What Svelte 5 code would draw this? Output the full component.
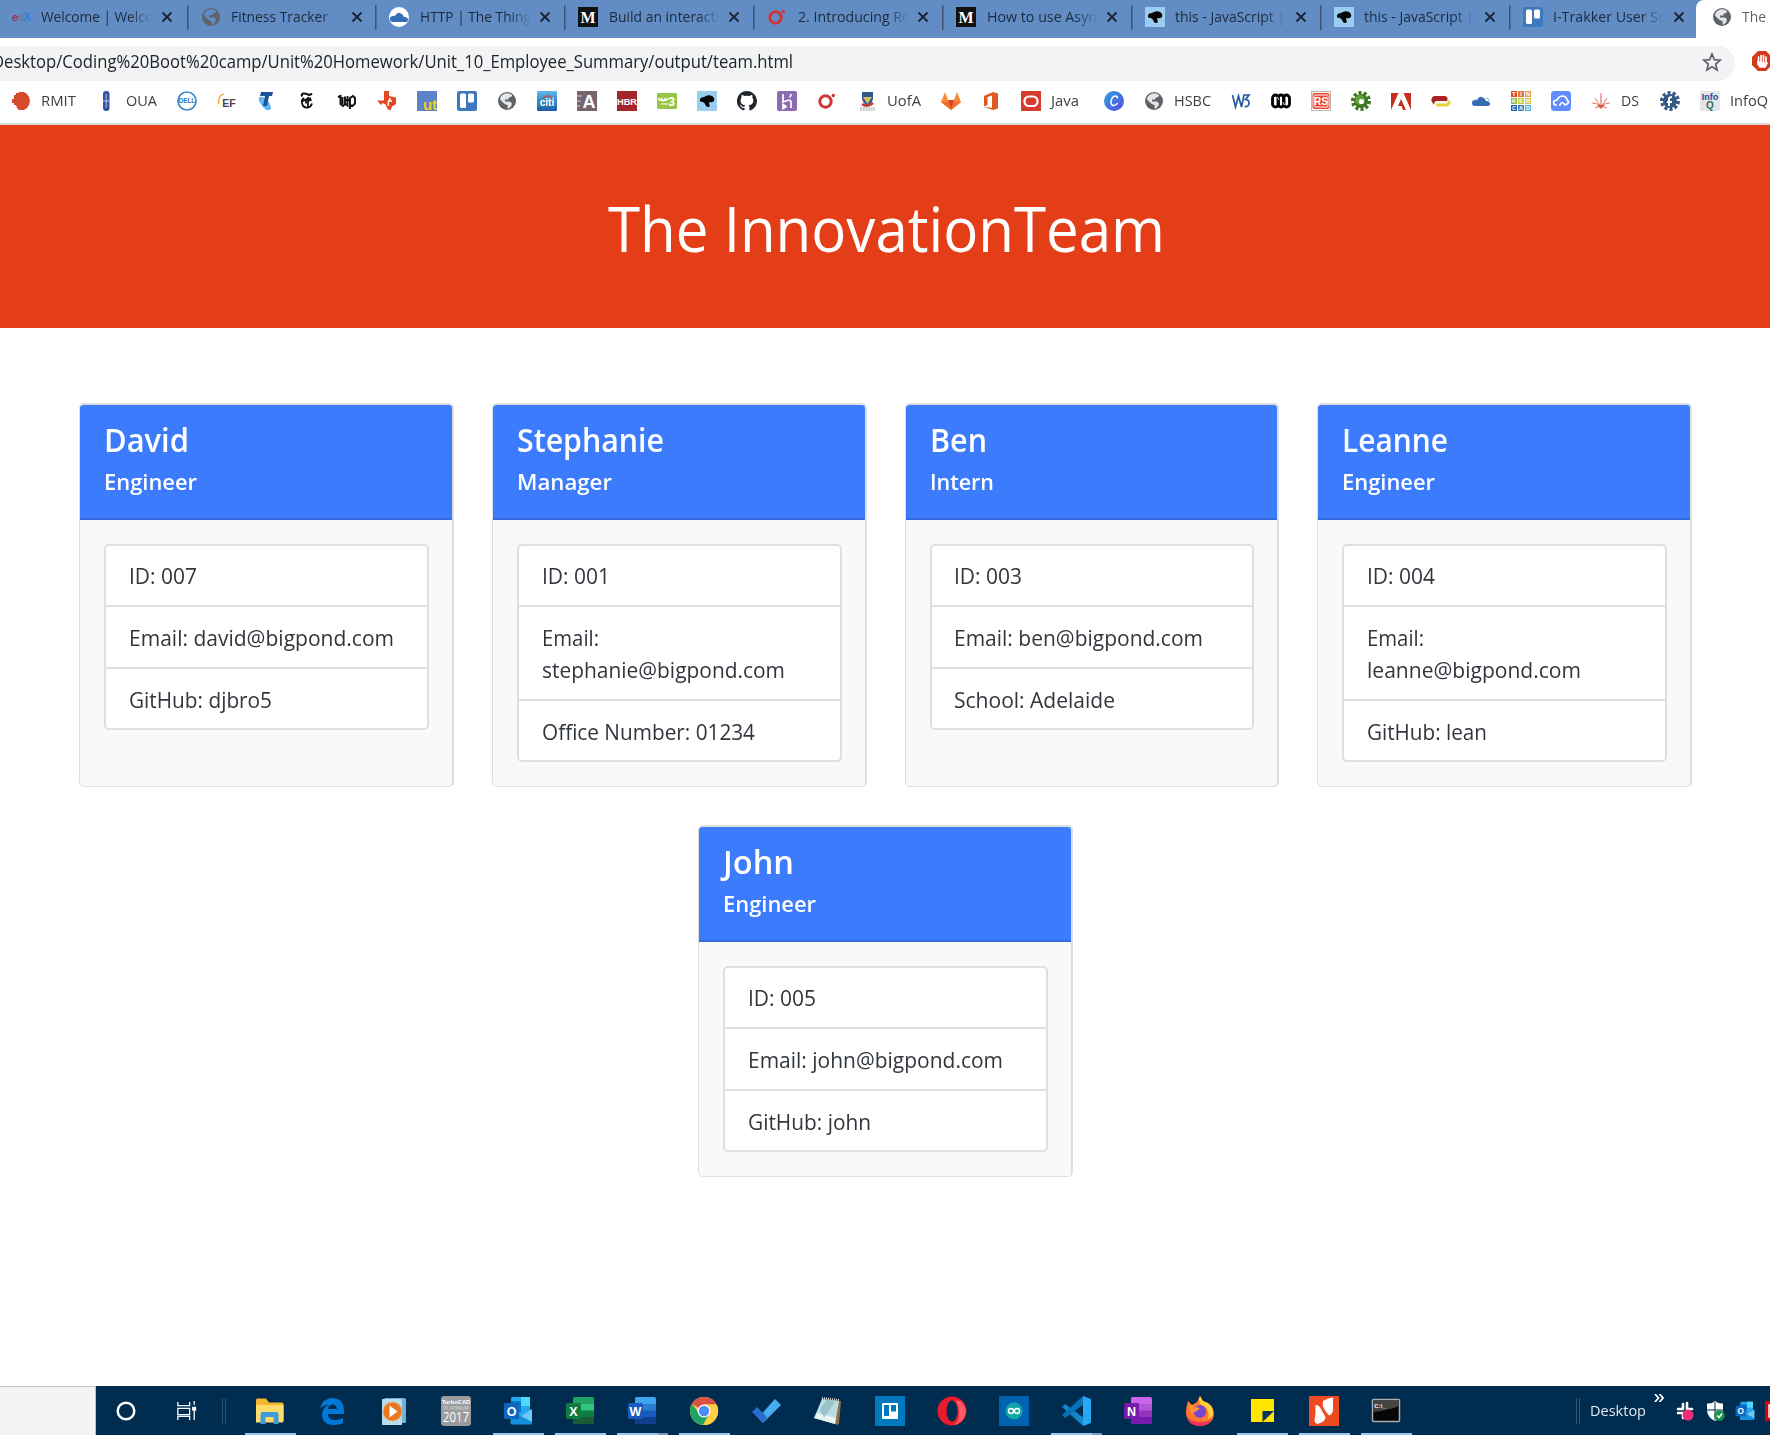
<script>
  // Draws a label at an exact width by scaling it horizontally.
  function fit(node, width) {
    const natural = node.getBoundingClientRect().width;
    if (natural && width) node.style.transform = `scaleX(${width / natural})`;
  }

  const t = (x, y, size, fill, text, extra = '') =>
    `<text x="${x}" y="${y}" font-size="${size}" fill="${fill}" text-anchor="middle" ${extra}>${text}</text>`;
  const sans = 'font-family="Liberation Sans, sans-serif" font-weight="bold"';
  const serif = 'font-family="Liberation Serif, serif" font-weight="bold"';

  const trello = `<rect width="20" height="20" rx="2" fill="#3d79bd"/><rect x="3" y="2.5" width="6" height="14.5" rx="1.5" fill="#fff"/><rect x="11" y="2.5" width="6" height="9" rx="1.5" fill="#fff"/>`;
  const globe = `<circle cx="10" cy="10" r="9" fill="#5f6368"/><path d="M8 2.5Q12 1.5 15 4q0 2-3 2.500L11 8.500H8v2h5l2 2-1 3-3 2.500q-1-2 0-3.500l-4-2-4-4q0-4 5-6z" fill="#e4e6e9"/>`;
  const tabGlobe = globe.replace('#e4e6e9', '#618dc4');
  const beast = `<rect width="20" height="20" fill="#9bcdf0"/><path d="M3 8q1-2 4-2 4-3 8-1 3 2 2 5-2 2-5 1 0 2 1 4-2 2-4 0-1-3-3-4l-3-.5z" fill="#050505"/>`;
  const medium = `<rect width="20" height="20" fill="#111"/>${t(10, 15.500, 16, '#fff', 'M', serif)}`;
  const oring = `<circle cx="8.500" cy="10.500" r="5.700" fill="none" stroke="#cf3438" stroke-width="3"/><circle cx="16.300" cy="4.500" r="1.700" fill="#cf3438"/>`;
  const gear = (c) => `<circle cx="10" cy="10" r="8" fill="none" stroke="${c}" stroke-width="4" stroke-dasharray="3 2"/><circle cx="10" cy="10" r="7" fill="${c}"/>`;
  const cloud = (c) => `<path d="M4 15a3 3 0 0 1 0-6q1-1 2 0 2-4 5-3t4 4q4 0 4 3 0 2-2 2z" fill="${c}"/>`;
  const office = (letter, dark, c) =>
    `<rect x="8" y="1" width="21" height="27" rx="1.500" fill="${c[0]}"/><rect x="8" y="8" width="21" height="7" fill="${c[1]}"/><rect x="8" y="14.500" width="21" height="7" fill="${c[2]}"/><rect x="8" y="21" width="21" height="7" rx="1" fill="${c[3]}"/><rect x="1" y="7" width="15" height="16" rx="1.500" fill="${dark}"/>${t(8.5, 19.5, 12.5, '#fff', letter, sans)}`;
  const outlook = `<rect x="8" y="1" width="19" height="20" rx="1.500" fill="#28a8ea"/><rect x="18" y="1" width="9" height="9" fill="#50d9ff"/><rect x="8" y="5" width="10" height="11" fill="#0078d4"/><path d="M8 14l10 6 11-7v14q0 1.500-1.500 1.500H9q-1.500 0-1.500-1.500z" fill="#1490df"/><path d="M18 20l11-7v13z" fill="#70c8f5"/><rect x="1" y="7" width="15" height="16" rx="1.500" fill="#0f66bd"/>${t(8.5, 19.5, 12.5, '#fff', 'O', sans)}`;

  const icons = {
    edx: t(4, 14, 11, '#a7275d', 'e', sans) + t(10, 14, 11, '#6d7899', 'd', sans) + t(16, 14, 12, '#2e83e6', 'X', sans),
    globe, tabGlobe, medium, oring, beast, trello,
    things: `<circle cx="10" cy="10" r="10" fill="#fff"/>${cloud('#356fb4')}`,
    rmit: `<path d="M3 4h2V2h3V1h5l3 2 2 3 1 4-1 4-2 3-3 2H8l-2-2-1-3H3v-2H1V8h2z" fill="#d44a2b"/>`,
    oua: `<rect x="7" y="0" width="6.500" height="20" rx="3" fill="#3350a5"/><path d="M7 10h6.500M10.200 3v14" stroke="#b9c6e6" stroke-width="1"/>`,
    dell: `<circle cx="10" cy="10" r="9" fill="#fff" stroke="#3c86c6" stroke-width="1.700"/>${t(10, 12.3, 6.3, '#2378bf', 'DELL', sans)}`,
    ef: `<path d="M7 3Q0 5 2 13" fill="none" stroke="#eda23c" stroke-width="1.300"/>${t(12, 15.5, 10.5, '#444', 'EF', sans)}`,
    telstra: `<path d="M2 6q5-1 8 3 4 4 4 9-4 3-7-1Q1 11 2 6z" fill="#5cb8ee"/><path d="M4 1h12l-1 4h-3l-2 10H6L8 5H3z" fill="#1e50a0"/>`,
    times: `<path d="M5 5.500q-1-3 2-3 2 0 4 1t4-1" fill="none" stroke="#111" stroke-width="2.200"/><path d="M14 7l-3 1.500q2 1.500 3.500 0M7 7q-3 2-2 5 1 5 5.500 4.500Q14 16 15 12.500M11 6v10M5 10.500l4-2v4" fill="none" stroke="#111" stroke-width="1.800"/>`,
    wp: `<path d="M1 6l2.500-1v8L6 15l2-2V5.500M5.500 6v7M8.500 13l2 1.500V5M8 9h5M13 6v12M13 7l3-2 2 2v5.500L15.500 15 13 13.500" fill="none" stroke="#111" stroke-width="1.900"/>`,
    texas: `<path d="M7 0h5v5l7 1.500v6.500l-4 2.500-1.500 4-3-1.500-2-4.500-3-1.500-1.500 2L0 9.500h7z" fill="#e4461f"/><path d="M13.500 7q-3.500 5-2 8m0-5h3.500" stroke="#fff" stroke-width="1.500" fill="none"/>`,
    ut: `<rect width="20" height="20" fill="#5b83c7"/>${t(13, 19, 15, '#f6cd25', 'ut', sans)}`,
    citi: `<defs><linearGradient id="cg" x2="0" y2="1"><stop stop-color="#5fb9ec"/><stop offset="1" stop-color="#195ca7"/></linearGradient></defs><rect width="20" height="20" rx="1" fill="url(#cg)"/>${t(10, 14.5, 10, '#fff', 'citi', sans)}<path d="M6 7q4-4 9 0" stroke="#b9505b" fill="none" stroke-width="1.300"/>`,
    aicon: `<rect width="20" height="20" fill="#76656f"/>${t(12, 17, 18, '#fff', 'A', sans)}<path d="M0 5h5M0 10h4M0 15h3" stroke="#d9d2d6"/>`,
    hbr: `<rect width="20" height="20" fill="#a3262a"/>${t(10, 13.5, 9.3, '#fff', 'HBR', sans)}`,
    w3: `<rect y="2" width="20" height="16" rx="1" fill="#98c544"/><path d="M2 7q1 4 3 1 1 4 3 0 1 3 3-1" stroke="#fff" stroke-width="1.600" fill="none"/>${t(14.500, 14.500, 12, '#fff', '3', sans)}<path d="M4 13h7" stroke="#fff"/>`,
    github: `<path d="M10 0a10 10 0 0 0-3.200 19.500c.5.100.7-.2.7-.5v-2c-2.800.6-3.400-1.200-3.400-1.200-.5-1.100-1.100-1.500-1.100-1.500-.9-.6.100-.6.100-.6 1 .1 1.500 1 1.500 1 .9 1.600 2.400 1.100 2.900.9.100-.7.400-1.100.6-1.300-2.200-.3-4.500-1.100-4.500-5 0-1.100.4-2 1-2.700-.1-.2-.4-1.200.1-2.600 0 0 .8-.3 2.700 1a9.500 9.500 0 0 1 5 0c2-1.300 2.800-1 2.800-1 .5 1.400.2 2.400.1 2.600.6.700 1 1.600 1 2.700 0 3.900-2.300 4.700-4.600 5 .4.300.7.900.7 1.800V19c0 .3.200.6.700.5A10 10 0 0 0 10 0z" fill="#20262d"/>`,
    heroku: `<rect width="20" height="20" rx="2" fill="#8d6bb0"/><path d="M6 3v8q8-3.500 8 0v6M6 13.500l3 2.200L6 17.500zM14 3q0 2-1.500 3.500" fill="none" stroke="#fff" stroke-width="1.700"/>`,
    uofa: `<path d="M5 1h11v7q-2 6-5.500 6T5 8z" fill="#315988"/><path d="M6 6h9l-4.500 7z" fill="#d8bd66"/><path d="M5 13q5 4 11-1" stroke="#c53831" stroke-width="2.500" fill="none"/><path d="M3 17h15M3 19h15" stroke="#9a9a9a" stroke-dasharray="2 .7"/>`,
    gitlab: `<path d="M0 11L4 1l3 8h6l3-8 4 10-10 8z" fill="#fc8a35"/><path d="M7 9h6l-3 10z" fill="#dd4525"/><path d="M0 11h7l3 8zM20 11h-7l-3 8z" fill="#ef6d2d"/>`,
    office: `<path d="M3 5l9-4 5 1.500v15L12 19l-9-3 8 .8V4.500L6.500 6v8L3 15.500z" fill="#df5920"/>`,
    java: `<rect width="20" height="20" fill="#d83b2d"/><rect x="3.500" y="5.500" width="13" height="9.500" rx="4.500" stroke="#fff" stroke-width="2.200" fill="none"/>`,
    canva: `<defs><linearGradient id="cv" y2="1"><stop stop-color="#27a4dd"/><stop offset="1" stop-color="#5a4be2"/></linearGradient></defs><circle cx="10" cy="10" r="10" fill="url(#cv)"/><path d="M13.500 7.500q0-2.500-2-2.500C8.500 5 7 8.500 7 11.500 7 16 12 15 13.500 12" stroke="#fff" stroke-width="1.500" fill="none"/>`,
    w3c: `<path d="M1.500 4l3 12L7.500 5l3 11 2.500-12h5l-3.500 4.500q3.500 0 3.500 3.500 0 4-4.500 3.500" fill="none" stroke="#245ba4" stroke-width="1.700"/>`,
    abc: `<g fill="none" stroke="#000" stroke-width="2.800"><rect x="1.500" y="4" width="6" height="12" rx="3"/><rect x="7" y="4" width="6" height="12" rx="3"/><rect x="12.500" y="4" width="6" height="12" rx="3"/></g><path d="M6.500 6l1.500 3M12 11l1.500 3" stroke="#fff" stroke-width=".9"/>`,
    rs: `<rect width="20" height="20" fill="#bbb5b3"/><rect x="1" y="1" width="18" height="18" fill="#fff"/><rect x="1.500" y="2" width="17" height="16" rx="2" fill="#e7452e"/><rect x="3" y="4" width="14" height="12" rx="1" fill="none" stroke="#fff"/>${t(10, 14, 10, '#fff', 'RS', sans)}`,
    green: gear('#3c7421') + '<circle cx="9" cy="9" r="5" fill="#63a13b"/><circle cx="10.500" cy="10.500" r="2.600" fill="#fff"/>',
    adobe: `<path d="M0 2h7.500L0 19zM12.500 2H20v17zM10 8l5 11h-3l-1.500-4H7z" fill="#c5301d"/>`,
    pill: `<path d="M17 9q4 1 2 4-1 2.500-4 2.500H8q-4 0-3-3h9q3 0 3-3.500z" fill="#e6d534"/><path d="M1 11q-2-4 2-6h11q4 1 2 5H6q-3 0-3 4z" fill="#a92323"/>`,
    cloud: cloud('#356eb2') + '<path d="M15 7q3 0 3 3" stroke="#8bb0da" fill="none"/>',
    tinker: ['#d94d29', '#e27634', '#e99a45', '#91ba43', '#c4cc46', '#d8ca3c', '#2b5b9f', '#3e83c4', '#5eacdf']
      .map((c, i) => `<rect x="${(i % 3) * 7}" y="${Math.floor(i / 3) * 7}" width="6" height="6" fill="${c}"/>${t((i % 3) * 7 + 3, Math.floor(i / 3) * 7 + 5, 5.5, '#fff', 'TINKERCAD'[i], sans)}`).join(''),
    car: `<rect width="20" height="20" rx="3.500" fill="#5f8dfc"/><path d="M6 14H4q-2-1-1-4l3-1q2-4 6-4 4 1 4 4 3 2 0 4l-2 1q-3-5-5 0H8" fill="none" stroke="#fff" stroke-width="1.700"/>`,
    ds: `<path d="M10 16V2M10 16L4 7M10 16l6-9M10 15Q6 12 1 12M10 15q4-3 9-3M10 15l-6 2M10 15l6 2" fill="none" stroke="#e6776b" stroke-width="1"/><path d="M9 6l1-5 1 5v9H9z" fill="#eeaaa2"/><path d="M6 14h8l-4 4z" fill="#df5648"/>`,
    bluegear: gear('#395985') + '<path d="M9 15V8q0-2 3-2M7 11h5" fill="none" stroke="#fff" stroke-width="2"/>',
    infoq: `<rect width="20" height="20" rx="2" fill="#e1e5e7"/>${t(10, 9, 9, '#1a4e9b', 'Info', sans)}${t(10, 18, 10, '#28745a', 'Q', sans)}`
  };

  const tabs = [
    { icon: 'edx', label: 'Welcome | Welco', w: 112 },
    { icon: 'tabGlobe', label: 'Fitness Tracker', w: 97 },
    { icon: 'things', label: 'HTTP | The Thing', w: 111 },
    { icon: 'medium', label: 'Build an interacti', w: 110 },
    { icon: 'oring', label: '2. Introducing Re', w: 112 },
    { icon: 'medium', label: 'How to use Asyn', w: 110 },
    { icon: 'beast', label: 'this - JavaScript |', w: 110 },
    { icon: 'beast', label: 'this - JavaScript |', w: 110 },
    { icon: 'trello', label: 'I-Trakker User Sc', w: 112 }
  ];

  const bookmarks = [
    ['rmit', 'RMIT', 35, 35], ['oua', 'OUA', 31, 31], ['dell'], ['ef'], ['telstra'], ['times'], ['wp'], ['texas'],
    ['ut'], ['trello'], ['globe'], ['citi'], ['aicon'], ['hbr'], ['w3'], ['beast'], ['github'], ['heroku'],
    ['oring'], ['uofa', 'UofA', 34, 34], ['gitlab'], ['office'], ['java', 'Java', 28, 33], ['canva'],
    ['globe', 'HSBC', 37, 37], ['w3c'], ['abc'], ['rs'], ['green'], ['adobe'], ['pill'], ['cloud'], ['tinker'],
    ['car'], ['ds', 'DS', 18, 19], ['bluegear'], ['infoq', 'InfoQ', 38, 37]
  ];

  const team = [
    { name: 'David', nw: 85, role: 'Engineer', rw: 93, rows: [[['ID: 007', 68]], [['Email: david@bigpond.com', 265]], [['GitHub: djbro5', 143]]] },
    { name: 'Stephanie', nw: 147, role: 'Manager', rw: 95, rows: [[['ID: 001', 68]], [['Email:', 57], ['stephanie@bigpond.com', 243]], [['Office Number: 01234', 213]]] },
    { name: 'Ben', nw: 57, role: 'Intern', rw: 64, rows: [[['ID: 003', 68]], [['Email: ben@bigpond.com', 249]], [['School: Adelaide', 161]]] },
    { name: 'Leanne', nw: 106, role: 'Engineer', rw: 93, rows: [[['ID: 004', 68]], [['Email:', 57], ['leanne@bigpond.com', 214]], [['GitHub: lean', 120]]] },
    { name: 'John', nw: 71, role: 'Engineer', rw: 93, rows: [[['ID: 005', 68]], [['Email: john@bigpond.com', 255]], [['GitHub: john', 123]]] }
  ];

  const apps = [
    { open: 1, art: `<path d="M1 4q0-1.500 1.500-1.500H11l3 4h13q1.500 0 1.500 1.500v17H1z" fill="#f5b62f"/><path d="M1 9h27.500v16q0 1.500-1.500 1.500H1z" fill="#ffdb6c"/><path d="M5.500 28V18q0-2 2-2h14q2 0 2 2v10h-5v-7h-8v7z" fill="#3f9ddb"/>` },
    { art: `<path d="M3 13Q5 2 16 2q11 1 11 13v3H11q0 6 7 6 5 0 8-2v5q-4 2-9 2Q5 29 5 18 6 11 12 9q-6 0-9 4zM11 13h9q-1-4.500-4.500-4.500T11 13z" fill="#0078d7"/>` },
    { art: `<rect x="5" y="2" width="22" height="25" rx="1.500" fill="#6fb2d4"/><rect x="3" y="3" width="20" height="26" rx="1" fill="#b6dced"/><circle cx="13.500" cy="15.500" r="9.500" fill="#e97722" stroke="#f4ad6d"/><path d="M10.500 9.500v12l8-6z" fill="#fff"/>` },
    { art: `<rect width="30" height="30" rx="3" fill="#9b9c9e"/>${t(15, 8, 5.800, '#fff', 'TurboCAD', sans)}${t(15, 14, 5, '#c5c5c5', 'PLATINUM', sans)}${t(15, 26, 14, '#fff', '2017', 'font-family="Open Sans, sans-serif" textLength="26" lengthAdjust="spacingAndGlyphs"')}` },
    { open: 1, art: outlook },
    { open: 1, art: office('X', '#107c41', ['#21a366', '#33c481', '#107c41', '#185c37']) },
    { open: 2, art: office('W', '#185abd', ['#41a5ee', '#2b7cd3', '#185abd', '#103f91']) },
    { open: 1, art: `<circle cx="15" cy="15" r="14" fill="#ffcd46"/><path d="M15 15L2.900 8A14 14 0 0 1 27.500 8.500H15z" fill="#dd5144"/><path d="M2.900 8A14 14 0 0 0 14 29l6-11-5-3-5 2z" fill="#1da462"/><path d="M15 8.500h12.500A14 14 0 0 1 14 29l7-11z" fill="#ffcd46"/><circle cx="15" cy="15" r="6.500" fill="#fff"/><circle cx="15" cy="15" r="5.200" fill="#4c8bf5"/>` },
    { art: `<path d="M7 22L24 3l6 6-18 18z" fill="#46aef0"/><path d="M1 16l5-5 10 10-4 6z" fill="#2b6ccd"/>` },
    { art: `<path d="M9 3l19 2-2 23-3 1z" fill="#8b7048"/><path d="M9 3l17 2-4 23L1 22z" fill="#bbdde1"/><path d="M4 17l19 5-1 6L1 22z" fill="#e9f5f3"/><path d="M7 13l7-10 8 3-11 16z" fill="#75a9b5" opacity=".5"/><path d="M9 2l17 2" stroke="#ddd" stroke-width="2" stroke-dasharray="1 1"/>` },
    { art: `<rect width="30" height="30" fill="#0079bf"/><rect x="7" y="7" width="16" height="16" rx="1" fill="#fff"/><rect x="9" y="9" width="5" height="11" fill="#0079bf"/><rect x="16" y="9" width="5" height="6.500" fill="#0079bf"/>` },
    { art: `<ellipse cx="15" cy="15" rx="14.500" ry="14.500" fill="#e81a2b"/><path d="M18 5q7-3 11 9-1 13-13 15 7-3 6-14-1-9-4-10z" fill="#ff5963"/><ellipse cx="15" cy="15" rx="5.500" ry="10.500" fill="#002c4f"/>` },
    { art: `<rect width="30" height="30" fill="#0063b1"/><circle cx="15" cy="15" r="8.500" fill="#12a4a7"/><g fill="none" stroke="#fff" stroke-width="1.400"><circle cx="12" cy="15" r="2.500"/><circle cx="18" cy="15" r="2.500"/></g>` },
    { open: 2, art: `<path d="M22 0v30L1 11l3-3 19 14z" fill="#1684c9"/><path d="M22 0L1 19l3 3L23 8z" fill="#0873b6"/><path d="M22 0l8 3v24l-8 3z" fill="#29a8f2"/>` },
    { art: office('N', '#7719aa', ['#ca64ea', '#b156d7', '#9332bf', '#7719aa']) },
    { art: `<path d="M3 5l4 4 5-3 3-6 3 5q11 3 11 13-1 11-14 12Q2 29 1 17q0-7 2-12z" fill="#ff7930"/><path d="M15 0l3 5q11 3 10 14l-5 5q3-12-8-16-2-4 0-8z" fill="#ffcf3b"/><path d="M1 18q2 12 14 12 8 0 12-7-6 4-13 3Q4 26 1 18z" fill="#f9305c"/><circle cx="15" cy="15.500" r="6.300" fill="#7545d3"/><path d="M4 9q4 0 6 2l5 1-3 3-5 2z" fill="#ff9435"/>` },
    { open: 1, art: `<path d="M4 3h23v23H4z" fill="#ffe500"/><path d="M15.500 26V15H27z" fill="#0c365a"/>` },
    { open: 1, art: `<rect width="30" height="30" fill="#f04a20"/><path d="M14 5q4-3 10-3.500v12q0 4-4 6l-4-5q-3-4-2-9.500zM6.500 9q4 0 6 5l4 7q0 5-8 7-3-1-3-4 1.500-7 1-15z" fill="#fff"/>` },
    { open: 1, art: `<rect x="1.500" y="3.500" width="27" height="22" rx="1" fill="#060606" stroke="#adadad" stroke-width="1.500"/><path d="M2 4h26v6q-10 4-26 6z" fill="#444"/>${t(9, 12, 6, '#fff', 'C:\\_', sans)}` }
  ];
</script>

{#snippet icon(name)}
  <svg class="icon" viewBox="0 0 20 20">{@html icons[name]}</svg>
{/snippet}

<div class="screen">
  <div class="tabs">
    {#each tabs as tab}
      <div class="tab">
        {@render icon(tab.icon)}
        <div class="tab-label"><span class="fit" use:fit={tab.w}>{tab.label}</span></div>
        <svg class="close" viewBox="0 0 12 12"><path d="M1.500 1.500l9 9m0-9l-9 9" /></svg>
      </div>
    {/each}
    <div class="tab active">
      {@render icon('globe')}
      <div class="tab-label last"><span class="fit" use:fit={24}>The</span></div>
    </div>
  </div>

  <div class="address">
    <div class="omnibox">
      <span class="fit" use:fit={801}>Desktop/Coding%20Boot%20camp/Unit%20Homework/Unit_10_Employee_Summary/output/team.html</span>
      <svg class="star" viewBox="0 0 20 20"><path d="M10 2l2.300 5.600 6 .5-4.600 4 1.400 5.900L10 14.800 4.900 18l1.400-5.900-4.600-4 6-.5z" /></svg>
    </div>
    <svg class="blocker" viewBox="0 0 20 20">
      <path d="M6 0h8l6 6v8l-6 6H6l-6-6V6z" fill="#d13a1d" />
      <path d="M6.500 11V6M9 11V4.500M11.500 11V4.500M14 11V6M6 10v3l2 3h5l2-4" stroke="#fff" stroke-width="1.700" stroke-linecap="round" fill="#fff" />
    </svg>
  </div>

  <div class="bookmarks">
    {#each bookmarks as [name, label, w, slot]}
      <div class="bookmark">
        {@render icon(name)}
        {#if label}
          <div class="slot" style="width: {slot}px"><span class="fit" use:fit={w}>{label}</span></div>
        {/if}
      </div>
    {/each}
  </div>

  <header class="hero"><h1 class="title" use:fit={557}>The InnovationTeam</h1></header>

  <main class="team">
    {#each team as m}
      <article class="card">
        <div class="card-head">
          <h2><span class="fit" use:fit={m.nw}>{m.name}</span></h2>
          <h4><span class="fit" use:fit={m.rw}>{m.role}</span></h4>
        </div>
        <div class="card-body">
          <ul>
            {#each m.rows as row}
              <li>
                {#each row as [line, w]}
                  <div><span class="fit" use:fit={w}>{line}</span></div>
                {/each}
              </li>
            {/each}
          </ul>
        </div>
      </article>
    {/each}
  </main>

  <footer class="taskbar">
    <div class="search"></div>
    <svg class="cortana" viewBox="0 0 20 20"><circle cx="10" cy="10" r="8.300" /></svg>
    <svg class="taskview" viewBox="0 0 22 22"><path d="M2 1v4h13V1M2 21v-4h13v4M2 8h13v7H2zM20 0v4M20 11v10" /><path d="M18.500 7h3v3h-3z" fill="#fff" /></svg>
    <div class="grip"></div>
    <div class="apps">
      {#each apps as app}
        <div class="app" class:open={app.open} class:stacked={app.open === 2}>
          <svg viewBox="0 0 30 30">{@html app.art}</svg>
        </div>
      {/each}
    </div>
    <div class="grip right"></div>
    <div class="desktop"><span class="fit" use:fit={56}>Desktop</span></div>
    <svg class="chevrons" viewBox="0 0 10 8"><path d="M1 0l3.500 4L1 8M5.500 0L9 4 5.500 8" /></svg>
    <div class="tray">
      <svg viewBox="0 0 20 20"><path d="M8 3v5M12 2v5M3 8h4M12 8h5M3 12h5M8 12v5" stroke="#fff" stroke-width="2.600" stroke-linecap="round" /><circle cx="13" cy="14" r="5.500" fill="#f12d75" /></svg>
      <svg viewBox="0 0 20 20"><path d="M10 0q4 3 8 2.500V10q-1 7-8 10Q3 17 2 10V2.500Q7 3 10 0z" fill="#fff" /><path d="M10 1v18M2 9h16" stroke="#002c4f" stroke-width="1" /><circle cx="14.500" cy="14.500" r="5.200" fill="#18934c" /><path d="M12 14.500l2 2 3-4" fill="none" stroke="#fff" stroke-width="1.500" /></svg>
      <svg viewBox="0 0 30 30">{@html outlook}</svg>
      <svg viewBox="0 0 20 20"><rect width="20" height="20" rx="1" fill="#d9000d" /><path d="M4 4h12v12H4z" fill="none" stroke="#fff" stroke-width="1.500" /></svg>
    </div>
  </footer>
</div>

<style>
  :global(body) { margin: 0; overflow: hidden; }
  * { box-sizing: border-box; }
  .screen { display: flex; flex-direction: column; width: 1770px; height: 1435px; overflow: hidden; background: #fff; font-family: 'Open Sans', 'Noto Sans', sans-serif; color: #30363c; }
  svg { display: block; flex: none; }
  .fit { display: inline-block; white-space: nowrap; transform-origin: 0 50%; }

  .tabs { display: flex; flex: none; height: 38px; background: #618dc4; padding-bottom: 4px; }
  .tab { display: flex; align-items: center; flex: none; width: 188.900px; height: 34px; padding-left: 14px; }
  .tab:first-child { width: 186.500px; padding-left: 10.500px; }
  .tab:not(:first-child):not(.active) { background: linear-gradient(#3e5571, #3e5571) 0 5px / 1.500px 25px no-repeat; }
  .icon { width: 20px; height: 20px; }
  .tab-label { width: 111px; margin: 0 0 2px 10.500px; overflow: hidden; font-size: 15px; line-height: 24px; color: #1c2a3c; mask-image: linear-gradient(90deg, #000 80%, transparent 100%); }
  .close { width: 12px; height: 12px; margin-left: 8.500px; stroke: #182333; stroke-width: 1.800; }
  .tab.active { width: 76px; height: 38px; margin-left: -2px; padding-left: 16px; padding-bottom: 4px; background: #fff; border-top-left-radius: 8px; }
  .tab-label.last { width: auto; color: #5f6368; mask-image: none; }

  .address { display: flex; align-items: center; flex: none; height: 46px; padding-bottom: 1px; }
  .omnibox { display: flex; align-items: center; width: 1735px; height: 35px; flex: none; padding-right: 13px; margin-top: 5px; border-radius: 0 18px 18px 0; background: #f1f3f4; font-size: 17.500px; line-height: 35px; color: #212529; }
  .omnibox .fit { margin: -4px 0 0 -8px; }
  .star { width: 20px; height: 20px; margin: -2px 0 0 auto; fill: none; stroke: #5f6368; stroke-width: 1.700; }
  .blocker { width: 20px; height: 20px; margin: 1px 0 0 17px; }

  .bookmarks { display: flex; gap: 20px; flex: none; height: 41px; padding: 7px 0 0 11px; border-bottom: 2px solid #d5d9dc; }
  .bookmark { display: flex; align-items: center; flex: none; height: 20px; }
  .slot { margin-left: 10px; font-size: 14.500px; line-height: 20px; color: #3c4043; }

  .hero { display: flex; align-items: center; justify-content: center; flex: none; height: 203px; padding: 3px 0 0 3px; background: #e43e19; }
  .title { margin: 0; white-space: nowrap; font-size: 62px; font-weight: 400; line-height: 76px; color: #fff; }

  .team { display: flex; flex-wrap: wrap; justify-content: center; align-content: flex-start; gap: 38px; flex: 1; padding: 75px 0 0 1.600px; }
  .card { display: flex; flex-direction: column; width: 374.700px; border: solid #dedfe1; border-width: 2px 2px 1px 1px; border-radius: 5px; overflow: hidden; background: #f8f9fb; }
  .card-head { flex: none; height: 115px; padding: 15px 24px 0; border-bottom: 2px solid #346ade; background: #3b7bfc; color: #fff; }
  h2 { margin: 0 0 7px; font-size: 33px; font-weight: 600; line-height: 40px; }
  h4 { margin: 0; font-size: 22px; font-weight: 600; line-height: 28px; }
  .card-body { flex: 1; padding: 24px 23px 24px 24px; }
  ul { margin: 0; padding: 0; list-style: none; border: 2px solid #dedfe0; border-radius: 5px; background: #fff; }
  li { padding: 13px 22px 14px 22.500px; font-size: 22px; line-height: 32px; }
  li div { height: 32px; }
  li + li { padding-top: 14px; border-top: 2px solid #dedfe0; }
  li:last-child { padding-bottom: 13px; }

  .taskbar { display: flex; align-items: center; flex: none; height: 49px; background: #002c4f; }
  .search { flex: none; width: 96px; height: 49px; background: #f3f3f4; border: solid #bfc1c2; border-width: 1px 1px 0 0; }
  .cortana { width: 20px; height: 20px; margin-left: 20px; fill: none; stroke: #fff; stroke-width: 2.500; }
  .taskview { width: 22px; height: 20px; margin-left: 39px; fill: none; stroke: #fff; stroke-width: 1.400; }
  .grip { flex: none; width: 4px; height: 26px; margin-left: 25px; border: solid #315371; border-width: 0 1px; }
  .apps { display: flex; flex: none; margin-left: 13px; }
  .app { display: flex; justify-content: center; align-items: center; flex: none; width: 62px; height: 49px; }
  .app svg { width: 30px; height: 30px; }
  .open { background: linear-gradient(#91c9f7, #91c9f7) 50% 100% / 51px 2px no-repeat; }
  .stacked { background: linear-gradient(90deg, #91c9f7 80%, #7a9dbb 80%) 50% 100% / 51px 2px no-repeat; }
  .grip.right { margin-left: 159px; }
  .desktop { flex: none; width: 64px; margin: 0 0 2px 10px; font-size: 15px; line-height: 24px; color: #e3e9ee; }
  .chevrons { width: 10px; height: 8px; margin: 0 11px 25px 0; fill: none; stroke: #fff; stroke-width: 1.700; }
  .tray { display: flex; gap: 10px; flex: none; }
  .tray svg { width: 20px; height: 20px; }
</style>
